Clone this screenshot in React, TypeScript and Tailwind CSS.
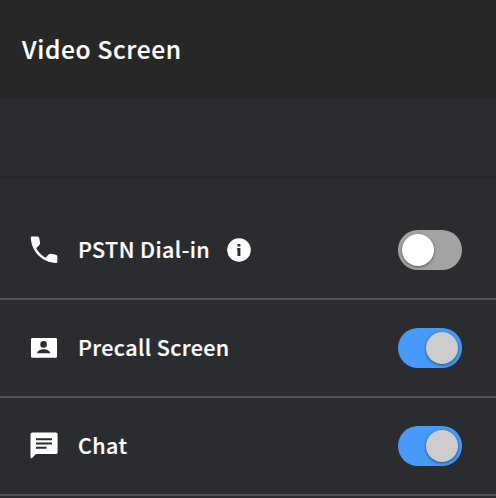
import type { ReactNode } from "react";

function PhoneIcon() {
  return (
    <svg viewBox="0 0 24 24" className="h-9 w-9 fill-white">
      <path d="M4 3h3.6q1 0 1.2 1l.6 3.3q.1.8-.5 1.4L6.8 10.9c1.4 2.6 3.5 4.8 6.2 6.3l2.3-2.3q.6-.5 1.4-.4l3.2.7q1 .2 1 1.2v3.4q0 .8-.8.8C11 20.6 3.6 13.2 3.2 3.9Q3.1 3 4 3z" />
    </svg>
  );
}

function PersonCardIcon() {
  return (
    <svg viewBox="0 0 26 20" className="h-5 w-[26px]">
      <rect width="26" height="19.7" rx="1.3" fill="#fff" />
      <circle cx="12.6" cy="6.4" r="3.3" fill="#2b2c30" />
      <path d="M6 15.3c0-2.6 4.2-4.1 6.7-4.1s6.6 1.5 6.6 4.1z" fill="#2b2c30" />
    </svg>
  );
}

function ChatIcon() {
  return (
    <svg viewBox="0 0 28 27" className="h-[27px] w-7">
      <path d="M2.4.5h23.6a1.6 1.6 0 0 1 1.6 1.6v18.4a1.6 1.6 0 0 1-1.6 1.6H6L2 26Q.5 27 .5 25V2.4A1.9 1.9 0 0 1 2.4.5z" fill="#fff" />
      <path d="M6 7.3h16M6 11.5h16M6 15.7h10.5" stroke="#2b2c30" strokeWidth="1.9" />
    </svg>
  );
}

function InfoIcon() {
  return (
    <svg viewBox="0 0 24 24" className="ml-[17px] h-6 w-6">
      <circle cx="12" cy="12" r="11.8" fill="#fff" />
      <path d="M10.5 6h2.9v2.4h-2.9zM10.2 10h3.2v7.9h-2.9v-6h-.3z" fill="#2b2c30" />
    </svg>
  );
}

function Toggle({ on }: { on?: boolean }) {
  return (
    <button
      type="button"
      role="switch"
      aria-checked={!!on}
      className={`flex h-10 w-16 items-center rounded-full px-1 ${on ? "justify-end bg-[#479af8]" : "justify-start bg-[#a5a3a2]"}`}
    >
      <span className={`h-8 w-8 rounded-full shadow-[0_1px_3px_rgba(0,0,0,0.5)] ${on ? "bg-[#cdcdcd]" : "bg-white"}`} />
    </button>
  );
}

function Row({ icon, label, info, on }: { icon: ReactNode; label: string; info?: boolean; on?: boolean }) {
  return (
    <div className="flex h-[98px] items-center border-b-2 border-[#505051] pl-[26px] pr-[34px]">
      <div className="flex w-9 justify-center pb-px">{icon}</div>
      <span className="ml-4 whitespace-nowrap pb-0.5 text-[21.5px] font-medium leading-8 tracking-[0.4px] [-webkit-text-stroke:0.2px_white]">{label}</span>
      {info && <InfoIcon />}
      <div className="ml-auto">
        <Toggle on={on} />
      </div>
    </div>
  );
}

export default function App() {
  return (
    <div className="h-[498px] w-full overflow-hidden bg-[#2b2c30] font-['Noto_Sans_CJK_SC',sans-serif] text-white">
      <header className="flex h-[98px] items-center bg-[#272727] pl-[22px]">
        <h1 className="text-[24.5px] font-medium leading-9 tracking-[0.65px] [-webkit-text-stroke:0.2px_white]">Video Screen</h1>
      </header>
      <div className="mb-6 h-20 border-b-2 border-[#27282a]" />
      <Row icon={<PhoneIcon />} label="PSTN Dial-in" info />
      <Row icon={<PersonCardIcon />} label="Precall Screen" on />
      <Row icon={<ChatIcon />} label="Chat" on />
    </div>
  );
}
